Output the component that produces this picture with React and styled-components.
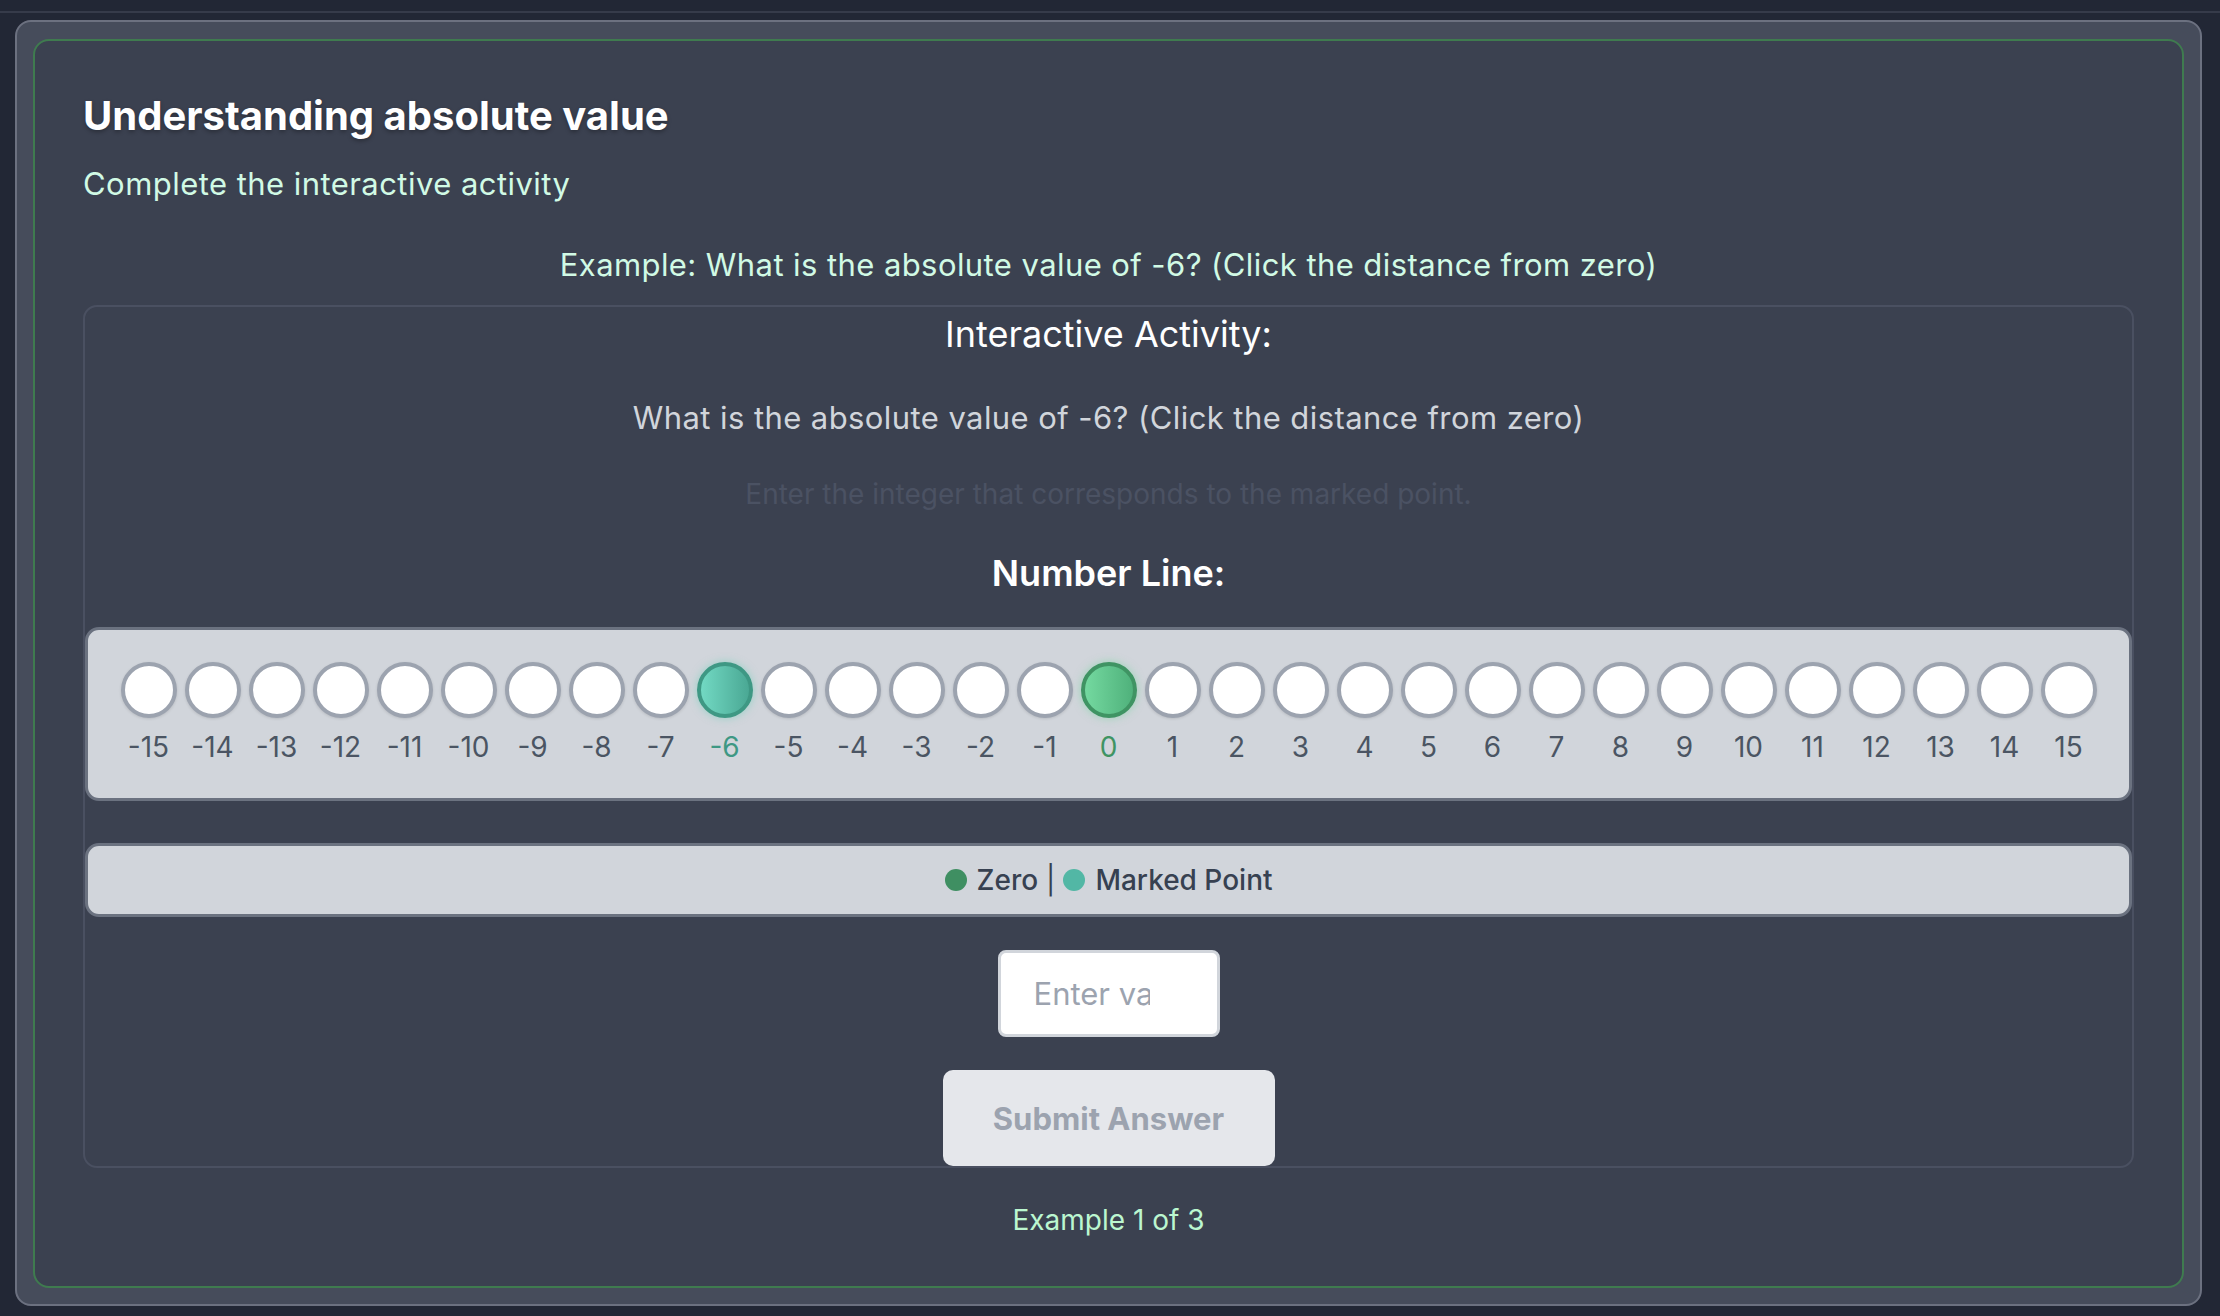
import React from "react";
import styled, { createGlobalStyle } from "styled-components";

const GlobalStyle = createGlobalStyle`
  body {
    margin: 0;
    background: #222735;
    font-family: Inter, "Noto Sans", "Liberation Sans", sans-serif;
  }
`;

const TopStrip = styled.div`
  height: 11px;
  border-bottom: 2px solid #363b4a;
`;

const Shell = styled.div`
  padding: 7px 18px 9px 15px;
`;

const OuterCard = styled.div`
  background: #464c5b;
  border: 2px solid #6c7180;
  border-radius: 16px;
  padding: 17px 16px 16px;
`;

const LessonCard = styled.div`
  background: #3b4150;
  border: 2px solid #3f7b4f;
  border-radius: 16px;
  padding: 47px 48px 45px;
  display: flex;
  flex-direction: column;
`;

const Title = styled.h1`
  margin: 0;
  font-size: 40px;
  line-height: 56px;
  font-weight: 700;
  color: #ffffff;
  text-shadow: 0 2px 4px rgba(0, 0, 0, 0.3);
`;

const Subtitle = styled.p`
  margin: 17px 0 0;
  font-size: 31px;
  letter-spacing: 0.45px;
  line-height: 45px;
  color: #d1fae5;
`;

const ExamplePrompt = styled.p`
  margin: 36px 0 0;
  font-size: 31px;
  letter-spacing: 0.42px;
  line-height: 45px;
  color: #d1fae5;
  text-align: center;
`;

const ActivityBox = styled.div`
  margin-top: 18px;
  border: 2px solid #4a5061;
  border-radius: 14px;
  display: flex;
  flex-direction: column;
  align-items: center;
`;

const ActivityHeading = styled.h2`
  margin: 3px 0 0;
  font-size: 36px;
  line-height: 49px;
  font-weight: 400;
  color: #ffffff;
`;

const Question = styled.p`
  margin: 36px 0 0;
  font-size: 31px;
  letter-spacing: 0.42px;
  line-height: 45px;
  color: #d1d5db;
`;

const Hint = styled.p`
  margin: 34px 0 0;
  font-size: 28px;
  line-height: 40px;
  color: #4b5263;
`;

const SectionLabel = styled.h3`
  margin: 35px 0 0;
  font-size: 36px;
  line-height: 49px;
  font-weight: 600;
  color: #ffffff;
`;

const LinePanel = styled.div`
  align-self: stretch;
  margin-top: 29px;
  background: #d1d5db;
  border: 3px solid #6b7280;
  border-radius: 14px;
  padding: 32px 0 30px;
  display: flex;
  justify-content: center;
  gap: 8px;
`;

const Tick = styled.div`
  width: 56px;
  display: flex;
  flex-direction: column;
  align-items: center;
  gap: 8px;
`;

const fills = {
  plain: "#ffffff",
  marked: "linear-gradient(90deg, #72d9c3, #4aa894)",
  zero: "linear-gradient(90deg, #74d9a0, #4fb17b)",
};

const rings = {
  plain: "#9ca3af",
  marked: "#3e9884",
  zero: "#3f9463",
};

const glows = {
  plain: "0 1px 3px rgba(0, 0, 0, 0.12)",
  marked: "0 0 8px rgba(94, 206, 180, 0.55)",
  zero: "0 0 8px rgba(104, 214, 150, 0.55)",
};

const Dot = styled.button`
  width: 56px;
  height: 56px;
  padding: 0;
  box-sizing: border-box;
  border-radius: 50%;
  border: 4px solid ${props => rings[props.kind]};
  background: ${props => fills[props.kind]};
  box-shadow: ${props => glows[props.kind]};
  cursor: pointer;
`;

const labelColors = {
  plain: "#4b5563",
  marked: "#3e9884",
  zero: "#3f9463",
};

const TickLabel = styled.span`
  font-size: 28px;
  line-height: 42px;
  color: ${props => labelColors[props.kind]};
`;

const Legend = styled.div`
  align-self: stretch;
  margin-top: 42px;
  height: 74px;
  box-sizing: border-box;
  background: #d1d5db;
  border: 3px solid #6b7280;
  border-radius: 14px;
  display: flex;
  align-items: center;
  justify-content: center;
  font-size: 28px;
  font-weight: 500;
  color: #374151;
`;

const LegendDot = styled.span`
  width: 22px;
  height: 22px;
  border-radius: 50%;
  background: ${props => props.color};
  margin-right: 10px;
`;

const Divider = styled.span`
  margin: 0 8px;
  font-weight: 400;
`;

const AnswerInput = styled.input`
  margin-top: 33px;
  width: 222px;
  height: 87px;
  box-sizing: border-box;
  border: 3px solid #d1d5db;
  border-radius: 8px;
  background: #ffffff;
  padding: 0 67px 0 33px;
  font-family: inherit;
  font-size: 31px;
  color: #111827;
  outline: none;

  &::placeholder {
    color: #9ca3af;
  }
`;

const SubmitButton = styled.button`
  margin-top: 33px;
  width: 332px;
  height: 96px;
  border: none;
  border-radius: 10px;
  background: #e5e7eb;
  color: #9ca3af;
  font-family: inherit;
  font-size: 31px;
  font-weight: 700;
`;

const Progress = styled.p`
  margin: 31px 0 0;
  font-size: 28px;
  line-height: 42px;
  color: #bbf7d0;
  text-align: center;
`;

const target = -6;
const ticks = Array.from({ length: 31 }, (_, i) => i - 15);

const kindOf = n => (n === 0 ? "zero" : n === target ? "marked" : "plain");

export default function App() {
  return (
    <>
      <GlobalStyle />
      <TopStrip />
      <Shell>
        <OuterCard>
          <LessonCard>
            <Title>Understanding absolute value</Title>
            <Subtitle>Complete the interactive activity</Subtitle>
            <ExamplePrompt>
              Example: What is the absolute value of -6? (Click the distance from zero)
            </ExamplePrompt>
            <ActivityBox>
              <ActivityHeading>Interactive Activity:</ActivityHeading>
              <Question>
                What is the absolute value of -6? (Click the distance from zero)
              </Question>
              <Hint>Enter the integer that corresponds to the marked point.</Hint>
              <SectionLabel>Number Line:</SectionLabel>
              <LinePanel>
                {ticks.map(n => (
                  <Tick key={n}>
                    <Dot kind={kindOf(n)} aria-label={String(n)} />
                    <TickLabel kind={kindOf(n)}>{n}</TickLabel>
                  </Tick>
                ))}
              </LinePanel>
              <Legend>
                <LegendDot color="#3f8f62" />
                Zero
                <Divider>|</Divider>
                <LegendDot color="#52b7a5" />
                Marked Point
              </Legend>
              <AnswerInput type="text" placeholder="Enter value" />
              <SubmitButton disabled>Submit Answer</SubmitButton>
            </ActivityBox>
            <Progress>Example 1 of 3</Progress>
          </LessonCard>
        </OuterCard>
      </Shell>
    </>
  );
}
